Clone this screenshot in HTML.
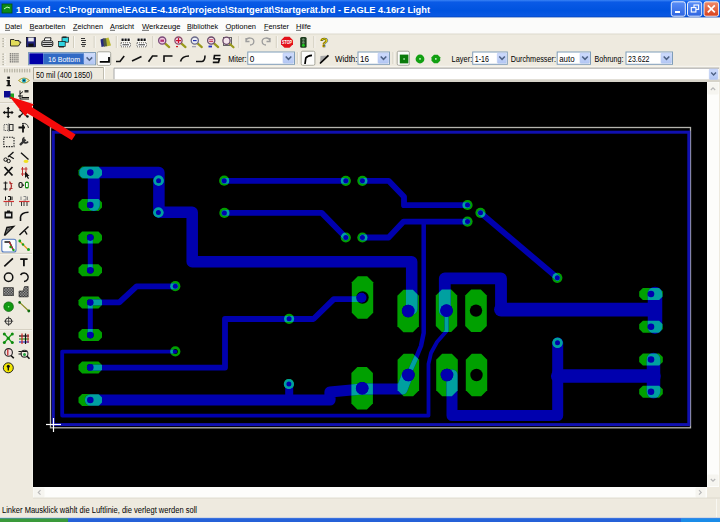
<!DOCTYPE html>
<html><head><meta charset="utf-8">
<style>*{margin:0;padding:0;box-sizing:border-box}
html,body{width:720px;height:522px;overflow:hidden;background:#eeeadf;font-family:"Liberation Sans",sans-serif;position:relative}
.a{position:absolute}
#canvas{left:33px;top:82px;width:674px;height:405px;background:#000}</style></head><body>
<svg class="a" style="left:0;top:0" width="720" height="522" viewBox="0 0 720 522" font-family="Liberation Sans, sans-serif"><defs><linearGradient id="ab" x1="0" y1="0" x2="0" y2="1"><stop offset="0" stop-color="#cfdcfd"/><stop offset="1" stop-color="#b2c6f3"/></linearGradient><linearGradient id="tg" x1="0" y1="0" x2="0" y2="1"><stop offset="0" stop-color="#3a83f5"/><stop offset="0.12" stop-color="#0a5ae6"/><stop offset="0.6" stop-color="#0053df"/><stop offset="0.9" stop-color="#0a58e2"/><stop offset="1" stop-color="#0040b8"/></linearGradient><linearGradient id="bg" x1="0" y1="0" x2="0" y2="1"><stop offset="0" stop-color="#5a8ff8"/><stop offset="1" stop-color="#2d64e0"/></linearGradient><linearGradient id="cg" x1="0" y1="0" x2="0" y2="1"><stop offset="0" stop-color="#f08c6c"/><stop offset="1" stop-color="#d8401c"/></linearGradient></defs><rect x="0" y="0" width="720" height="17.6" fill="url(#tg)"/><rect x="2" y="4" width="10" height="9" fill="#0c8a18" stroke="#045010" stroke-width="0.8"/><path d="M4,9 L7,7 L10,8" stroke="#c0ffc0" stroke-width="1" fill="none"/><text x="16" y="13.3" font-size="9.3" fill="#fff" font-weight="bold" textLength="414" lengthAdjust="spacingAndGlyphs">1 Board - C:\Programme\EAGLE-4.16r2\projects\Startgerät\Startgerät.brd - EAGLE 4.16r2 Light</text><rect x="671.3" y="1.8" width="14.0" height="14.4" rx="2" fill="url(#bg)" stroke="#fff" stroke-width="0.9"/><rect x="687.5" y="1.8" width="14.200000000000045" height="14.4" rx="2" fill="url(#bg)" stroke="#fff" stroke-width="0.9"/><rect x="675" y="11" width="5" height="2" fill="#fff"/><rect x="694" y="5" width="4.6" height="4.4" fill="none" stroke="#fff" stroke-width="1.1"/><rect x="691.3" y="7.6" width="4.6" height="4.4" fill="#3f76ea" stroke="#fff" stroke-width="1.1"/><rect x="704" y="1.8" width="14.6" height="14.4" rx="2" fill="url(#cg)" stroke="#fff" stroke-width="0.9"/><path d="M707.8,5.3 L714.8,12.3 M714.8,5.3 L707.8,12.3" stroke="#fff" stroke-width="1.7"/><rect x="0" y="17.6" width="720" height="16.6" fill="#fbfbfa"/><line x1="0" y1="34" x2="720" y2="34" stroke="#d6d2c2" stroke-width="0.8"/><text x="5" y="28.8" font-size="7.4" fill="#000" textLength="17" lengthAdjust="spacingAndGlyphs">Datei</text><text x="29.5" y="28.8" font-size="7.4" fill="#000" textLength="36" lengthAdjust="spacingAndGlyphs">Bearbeiten</text><text x="73" y="28.8" font-size="7.4" fill="#000" textLength="30" lengthAdjust="spacingAndGlyphs">Zeichnen</text><text x="110" y="28.8" font-size="7.4" fill="#000" textLength="24" lengthAdjust="spacingAndGlyphs">Ansicht</text><text x="142" y="28.8" font-size="7.4" fill="#000" textLength="38.5" lengthAdjust="spacingAndGlyphs">Werkzeuge</text><text x="187" y="28.8" font-size="7.4" fill="#000" textLength="31" lengthAdjust="spacingAndGlyphs">Bibliothek</text><text x="225.5" y="28.8" font-size="7.4" fill="#000" textLength="30.5" lengthAdjust="spacingAndGlyphs">Optionen</text><text x="264" y="28.8" font-size="7.4" fill="#000" textLength="25" lengthAdjust="spacingAndGlyphs">Fenster</text><text x="296" y="28.8" font-size="7.4" fill="#000" textLength="15" lengthAdjust="spacingAndGlyphs">Hilfe</text><line x1="5" y1="30.3" x2="10" y2="30.3" stroke="#000" stroke-width="0.6"/><line x1="29.5" y1="30.3" x2="34.5" y2="30.3" stroke="#000" stroke-width="0.6"/><line x1="73" y1="30.3" x2="77.5" y2="30.3" stroke="#000" stroke-width="0.6"/><line x1="110" y1="30.3" x2="115" y2="30.3" stroke="#000" stroke-width="0.6"/><line x1="142" y1="30.3" x2="149" y2="30.3" stroke="#000" stroke-width="0.6"/><line x1="187" y1="30.3" x2="191.5" y2="30.3" stroke="#000" stroke-width="0.6"/><line x1="225.5" y1="30.3" x2="230.5" y2="30.3" stroke="#000" stroke-width="0.6"/><line x1="264" y1="30.3" x2="268.5" y2="30.3" stroke="#000" stroke-width="0.6"/><line x1="296" y1="30.3" x2="301" y2="30.3" stroke="#000" stroke-width="0.6"/><rect x="2.3" y="38" width="2" height="1.3" fill="#b8b5a6"/><rect x="4.3" y="38" width="1.2" height="1.3" fill="#fff"/><rect x="2.3" y="40.6" width="2" height="1.3" fill="#b8b5a6"/><rect x="4.3" y="40.6" width="1.2" height="1.3" fill="#fff"/><rect x="2.3" y="43.2" width="2" height="1.3" fill="#b8b5a6"/><rect x="4.3" y="43.2" width="1.2" height="1.3" fill="#fff"/><rect x="2.3" y="45.800000000000004" width="2" height="1.3" fill="#b8b5a6"/><rect x="4.3" y="45.800000000000004" width="1.2" height="1.3" fill="#fff"/><path d="M10.5,39.5 L14,39.5 L15,40.5 L19,40.5 L19,42 L21,42 L18.5,46 L10.5,46 Z" fill="#e2dc5a" stroke="#222" stroke-width="0.9"/><rect x="26.3" y="37.3" width="9.4" height="9.6" fill="#22237c" stroke="#000" stroke-width="0.6"/><rect x="28.2" y="37.6" width="5.6" height="3.8" fill="#e8e8f0"/><rect x="28.4" y="43.6" width="5.2" height="3" fill="#101010"/><path d="M44,41 L45,37.8 L51,37.8 L50.5,41" fill="#fff" stroke="#111" stroke-width="0.9"/><rect x="41.8" y="40.8" width="11" height="5.6" rx="1.5" fill="#fff" stroke="#111" stroke-width="1"/><path d="M42.3,42.7 L52.3,42.7 M42.3,44.6 L52.3,44.6" stroke="#111" stroke-width="1"/><rect x="62" y="37.2" width="6.6" height="5" fill="#31d4e0" stroke="#111" stroke-width="0.7"/><rect x="58.6" y="41.5" width="6.6" height="5" fill="#31d4e0" stroke="#111" stroke-width="0.7"/><rect x="59" y="46" width="5" height="1.5" fill="#222"/><rect x="62.5" y="36.5" width="4" height="1.2" fill="#111"/><line x1="73.5" y1="36" x2="73.5" y2="48" stroke="#d2cebf" stroke-width="1"/><line x1="74.5" y1="36" x2="74.5" y2="48" stroke="#fff" stroke-width="0.6"/><path d="M81,38.5 L85,38.5 M81,40.5 L86,40.5 M82,42.5 L85.5,42.5 M81,44.5 L86,44.5 M82,46.3 L85,46.3" stroke="#333" stroke-width="1.1"/><line x1="94.2" y1="36" x2="94.2" y2="48" stroke="#d2cebf" stroke-width="1"/><line x1="95.2" y1="36" x2="95.2" y2="48" stroke="#fff" stroke-width="0.6"/><path d="M100.5,39.5 L104.5,38 L105.5,46 L101.5,47 Z" fill="#24287e"/><path d="M105,38.5 L108.5,37.5 L111,45.5 L106,46.5 Z" fill="#b8b830"/><path d="M103,39 L106,38.3 L107,46 L104,46.8 Z" fill="#505a40"/><line x1="116.3" y1="36" x2="116.3" y2="48" stroke="#d2cebf" stroke-width="1"/><line x1="117.3" y1="36" x2="117.3" y2="48" stroke="#fff" stroke-width="0.6"/><rect x="121" y="38" width="9.5" height="3.6" fill="#fff"/><path d="M121.5,39.8 L130,39.8" stroke="#111" stroke-width="2.4" stroke-dasharray="2.2 0.8"/><rect x="121" y="42.8" width="9.5" height="4" fill="#fff" stroke="#222" stroke-width="0.7" stroke-dasharray="1 1"/><path d="M122.5,44.8 L129,44.8" stroke="#333" stroke-width="1"/><rect x="137" y="38" width="9.5" height="3.6" fill="#fff"/><path d="M137.5,39.8 L146,39.8" stroke="#111" stroke-width="2.4" stroke-dasharray="2.2 0.8"/><rect x="137" y="42.8" width="9.5" height="4" fill="#fff" stroke="#222" stroke-width="0.7" stroke-dasharray="1 1"/><path d="M138.5,44.8 L145,44.8" stroke="#333" stroke-width="1"/><line x1="152.8" y1="36" x2="152.8" y2="48" stroke="#d2cebf" stroke-width="1"/><line x1="153.8" y1="36" x2="153.8" y2="48" stroke="#fff" stroke-width="0.6"/><line x1="164.7" y1="43.1" x2="169.2" y2="47.1" stroke="#9a9a1c" stroke-width="2.2" stroke-linecap="round"/><circle cx="162.2" cy="40.6" r="3.6" fill="#f0c8e0" stroke="#7a4a7a" stroke-width="1.3"/><rect x="160.4" y="39.6" width="3.6" height="2.2" fill="#b03070"/><line x1="181.0" y1="43.1" x2="185.5" y2="47.1" stroke="#9a9a1c" stroke-width="2.2" stroke-linecap="round"/><circle cx="178.5" cy="40.6" r="3.6" fill="#f4e0ec" stroke="#8a4a6a" stroke-width="1.3"/><path d="M176,40.6 L181,40.6 M178.5,38.1 L178.5,43.1" stroke="#d01030" stroke-width="1.3"/><rect x="176" y="46" width="2" height="1.2" fill="#d02020"/><line x1="197.3" y1="43.1" x2="201.8" y2="47.1" stroke="#9a9a1c" stroke-width="2.2" stroke-linecap="round"/><circle cx="194.8" cy="40.6" r="3.6" fill="#eceef4" stroke="#6a6a8a" stroke-width="1.3"/><path d="M193,40.6 L196.6,40.6" stroke="#2030b0" stroke-width="1.2"/><rect x="192" y="46.3" width="4" height="0.9" fill="#8080a0"/><line x1="213.7" y1="43.1" x2="218.2" y2="47.1" stroke="#9a9a1c" stroke-width="2.2" stroke-linecap="round"/><circle cx="211.2" cy="40.6" r="3.6" fill="#f4e4ec" stroke="#6a4a6a" stroke-width="1.3"/><path d="M209.2,39.8 L213.2,39.8 M209.2,41.6 L213.2,41.6" stroke="#c02040" stroke-width="0.9"/><rect x="208.5" y="45.6" width="3.5" height="1.8" fill="#2030c0"/><rect x="223.5" y="37.5" width="8" height="8" fill="#eee" stroke="#555" stroke-width="0.9"/><line x1="229.0" y1="43.3" x2="233.5" y2="47.3" stroke="#9a9a1c" stroke-width="2.2" stroke-linecap="round"/><circle cx="226.5" cy="40.8" r="3.6" fill="#f4e4ec" stroke="#6a4a6a" stroke-width="1.3"/><line x1="238.8" y1="36" x2="238.8" y2="48" stroke="#d2cebf" stroke-width="1"/><line x1="239.8" y1="36" x2="239.8" y2="48" stroke="#fff" stroke-width="0.6"/><path d="M246,40.5 A4,3.5 0 1 1 250,45 M246,38 L246,41.5 L249.5,41.5" fill="none" stroke="#9d9d9d" stroke-width="1.3"/><path d="M270,40.5 A4,3.5 0 1 0 266,45 M270,38 L270,41.5 L266.5,41.5" fill="none" stroke="#9d9d9d" stroke-width="1.3"/><line x1="276.3" y1="36" x2="276.3" y2="48" stroke="#d2cebf" stroke-width="1"/><line x1="277.3" y1="36" x2="277.3" y2="48" stroke="#fff" stroke-width="0.6"/><polygon points="284.5,36.8 289.5,36.8 293,40.3 293,44.3 289.5,47.8 284.5,47.8 281,44.3 281,40.3" fill="#e3101a"/><text x="282" y="44.3" font-size="4.6" fill="#fff" font-weight="bold" textLength="10" lengthAdjust="spacingAndGlyphs">STOP</text><rect x="300.2" y="37" width="6.4" height="10.8" rx="1.5" fill="#1c3a1c"/><circle cx="303.4" cy="39.5" r="1.3" fill="#6a8a6a"/><circle cx="303.4" cy="42.4" r="1.3" fill="#6a8a6a"/><circle cx="303.4" cy="45.3" r="1.5" fill="#1fc81f"/><line x1="313.8" y1="36" x2="313.8" y2="48" stroke="#d2cebf" stroke-width="1"/><line x1="314.8" y1="36" x2="314.8" y2="48" stroke="#fff" stroke-width="0.6"/><text x="320.3" y="47.2" font-size="12" fill="#fff200" font-weight="bold" textLength="8" lengthAdjust="spacingAndGlyphs">?</text><text x="320.3" y="47.2" font-size="12" font-weight="bold" fill="none" stroke="#3a3400" stroke-width="0.5" textLength="8" lengthAdjust="spacingAndGlyphs">?</text><rect x="2.3" y="53.5" width="2" height="1.3" fill="#b8b5a6"/><rect x="4.3" y="53.5" width="1.2" height="1.3" fill="#fff"/><rect x="2.3" y="56.1" width="2" height="1.3" fill="#b8b5a6"/><rect x="4.3" y="56.1" width="1.2" height="1.3" fill="#fff"/><rect x="2.3" y="58.7" width="2" height="1.3" fill="#b8b5a6"/><rect x="4.3" y="58.7" width="1.2" height="1.3" fill="#fff"/><rect x="2.3" y="61.300000000000004" width="2" height="1.3" fill="#b8b5a6"/><rect x="4.3" y="61.300000000000004" width="1.2" height="1.3" fill="#fff"/><rect x="2.3" y="63.900000000000006" width="2" height="1.3" fill="#b8b5a6"/><rect x="4.3" y="63.900000000000006" width="1.2" height="1.3" fill="#fff"/><rect x="9.8" y="53.3" width="1.1" height="1.1" fill="#444"/><rect x="11.700000000000001" y="53.3" width="1.1" height="1.1" fill="#444"/><rect x="13.600000000000001" y="53.3" width="1.1" height="1.1" fill="#444"/><rect x="15.5" y="53.3" width="1.1" height="1.1" fill="#444"/><rect x="17.4" y="53.3" width="1.1" height="1.1" fill="#444"/><rect x="9.8" y="55.3" width="1.1" height="1.1" fill="#444"/><rect x="11.700000000000001" y="55.3" width="1.1" height="1.1" fill="#444"/><rect x="13.600000000000001" y="55.3" width="1.1" height="1.1" fill="#444"/><rect x="15.5" y="55.3" width="1.1" height="1.1" fill="#444"/><rect x="17.4" y="55.3" width="1.1" height="1.1" fill="#444"/><rect x="9.8" y="57.3" width="1.1" height="1.1" fill="#444"/><rect x="11.700000000000001" y="57.3" width="1.1" height="1.1" fill="#444"/><rect x="13.600000000000001" y="57.3" width="1.1" height="1.1" fill="#444"/><rect x="15.5" y="57.3" width="1.1" height="1.1" fill="#444"/><rect x="17.4" y="57.3" width="1.1" height="1.1" fill="#444"/><rect x="9.8" y="59.3" width="1.1" height="1.1" fill="#444"/><rect x="11.700000000000001" y="59.3" width="1.1" height="1.1" fill="#444"/><rect x="13.600000000000001" y="59.3" width="1.1" height="1.1" fill="#444"/><rect x="15.5" y="59.3" width="1.1" height="1.1" fill="#444"/><rect x="17.4" y="59.3" width="1.1" height="1.1" fill="#444"/><rect x="9.8" y="61.3" width="1.1" height="1.1" fill="#444"/><rect x="11.700000000000001" y="61.3" width="1.1" height="1.1" fill="#444"/><rect x="13.600000000000001" y="61.3" width="1.1" height="1.1" fill="#444"/><rect x="15.5" y="61.3" width="1.1" height="1.1" fill="#444"/><rect x="17.4" y="61.3" width="1.1" height="1.1" fill="#444"/><rect x="28.5" y="52.5" width="67" height="12.3" fill="#fff" stroke="#7f9db9"/><rect x="29.3" y="53.3" width="13.9" height="10.8" fill="#0000a8"/><rect x="43.2" y="53.3" width="40.8" height="10.8" fill="#316ac5"/><text x="48" y="62" font-size="7.6" fill="#fff" textLength="32" lengthAdjust="spacingAndGlyphs">16 Bottom</text><rect x="84" y="53.5" width="10.8" height="10.4" rx="1" fill="url(#ab)" stroke="#b7c8f0" stroke-width="0.6"/><path d="M86.6,57.4 L89.4,60.2 L92.2,57.4" fill="none" stroke="#4d6185" stroke-width="1.5"/><rect x="97.1" y="51.8" width="13.600000000000009" height="13.600000000000009" rx="1.5" fill="#fcfcfb" stroke="#9d9d92" stroke-width="0.9"/><path d="M99.8,61.8 L109,61.8 L109,57" fill="none" stroke="#000" stroke-width="1.8"/><path d="M116,61.5 L120,61.5 L124.2,56" fill="none" stroke="#111" stroke-width="1.6"/><path d="M132,61 L141.5,56.5" fill="none" stroke="#111" stroke-width="1.6"/><path d="M148.5,61.8 L152.5,56 L157.5,56" fill="none" stroke="#111" stroke-width="1.6"/><path d="M164,62 L164,56 L172.5,56" fill="none" stroke="#111" stroke-width="1.6"/><path d="M180.5,61.5 Q182,56 189,56" fill="none" stroke="#111" stroke-width="1.6"/><path d="M196,61.5 L202,61.5 Q205,61 205,55.5" fill="none" stroke="#111" stroke-width="1.6"/><path d="M220.5,55.5 L214.5,55.5 L214,58.7 L219.5,58.9 L218.5,62.3 L212.8,62.3" fill="none" stroke="#111" stroke-width="1.7"/><text x="228.2" y="61.9" font-size="8.2" fill="#000" textLength="18.3" lengthAdjust="spacingAndGlyphs">Miter:</text><rect x="247.8" y="52.0" width="46.69999999999999" height="12.299999999999997" fill="#fff" stroke="#7f9db9"/><rect x="283" y="53.0" width="10.5" height="10.299999999999997" rx="1" fill="url(#ab)" stroke="#b7c8f0" stroke-width="0.6"/><path d="M285.7,56.55 L288.5,59.35 L291.3,56.55" fill="none" stroke="#4d6185" stroke-width="1.5"/><text x="249.8" y="61.699999999999996" font-size="8.2" fill="#000">0</text><line x1="297.3" y1="52" x2="297.3" y2="64" stroke="#d2cebf" stroke-width="1"/><line x1="298.3" y1="52" x2="298.3" y2="64" stroke="#fff" stroke-width="0.6"/><rect x="301.2" y="51.2" width="13.699999999999989" height="14.099999999999994" rx="1.5" fill="#fcfcfb" stroke="#9d9d92" stroke-width="0.9"/><path d="M305,64 L305.8,58 Q307.5,55.5 312,55.3" fill="none" stroke="#000" stroke-width="1.7"/><path d="M320,63 L320.5,56 L328,55.5 Z" fill="#a8a8a8"/><path d="M320,63.5 L328.5,55.3" stroke="#000" stroke-width="1.7"/><text x="335" y="61.9" font-size="8.2" fill="#000" textLength="22.5" lengthAdjust="spacingAndGlyphs">Width:</text><rect x="358.0" y="52.0" width="31.5" height="12.299999999999997" fill="#fff" stroke="#7f9db9"/><rect x="378" y="53.0" width="10.5" height="10.299999999999997" rx="1" fill="url(#ab)" stroke="#b7c8f0" stroke-width="0.6"/><path d="M380.7,56.55 L383.5,59.35 L386.3,56.55" fill="none" stroke="#4d6185" stroke-width="1.5"/><text x="360.0" y="61.699999999999996" font-size="8.2" fill="#000">16</text><line x1="393" y1="52" x2="393" y2="64" stroke="#d2cebf" stroke-width="1"/><line x1="394" y1="52" x2="394" y2="64" stroke="#fff" stroke-width="0.6"/><rect x="397.2" y="51.2" width="12.199999999999989" height="14.099999999999994" rx="1.5" fill="#fcfcfb" stroke="#9d9d92" stroke-width="0.9"/><rect x="399.8" y="54.6" width="8.6" height="8.8" fill="#0a7a0a"/><rect x="403.3" y="58.2" width="1.6" height="1.6" fill="#9fdc9f"/><circle cx="420" cy="59" r="4.4" fill="#12a012"/><rect x="419.2" y="58.2" width="1.6" height="1.4" fill="#e0ffe0"/><polygon points="434,54.7 437.7,54.7 440.2,57.2 440.2,60.8 437.7,63.3 434,63.3 431.5,60.8 431.5,57.2" fill="#12a012"/><rect x="435" y="58.2" width="1.6" height="1.4" fill="#e0ffe0"/><text x="451.6" y="61.9" font-size="8.2" fill="#000" textLength="20.6" lengthAdjust="spacingAndGlyphs">Layer:</text><rect x="472.7" y="52.0" width="34.60000000000002" height="12.299999999999997" fill="#fff" stroke="#7f9db9"/><rect x="497.3" y="53.0" width="9.0" height="10.299999999999997" rx="1" fill="url(#ab)" stroke="#b7c8f0" stroke-width="0.6"/><path d="M499.25,56.55 L502.05,59.35 L504.85,56.55" fill="none" stroke="#4d6185" stroke-width="1.5"/><text x="474.7" y="61.699999999999996" font-size="8.2" fill="#000" textLength="14.3" lengthAdjust="spacingAndGlyphs">1-16</text><text x="510.7" y="61.9" font-size="8.2" fill="#000" textLength="45.3" lengthAdjust="spacingAndGlyphs">Durchmesser:</text><rect x="557.2" y="52.0" width="33.299999999999955" height="12.299999999999997" fill="#fff" stroke="#7f9db9"/><rect x="580" y="53.0" width="9.5" height="10.299999999999997" rx="1" fill="url(#ab)" stroke="#b7c8f0" stroke-width="0.6"/><path d="M582.2,56.55 L585.0,59.35 L587.8,56.55" fill="none" stroke="#4d6185" stroke-width="1.5"/><text x="559.2" y="61.699999999999996" font-size="8.2" fill="#000" textLength="15.4" lengthAdjust="spacingAndGlyphs">auto</text><text x="594.5" y="61.9" font-size="8.2" fill="#000" textLength="29" lengthAdjust="spacingAndGlyphs">Bohrung:</text><rect x="626.0" y="52.0" width="46.5" height="12.299999999999997" fill="#fff" stroke="#7f9db9"/><rect x="661" y="53.0" width="10.5" height="10.299999999999997" rx="1" fill="url(#ab)" stroke="#b7c8f0" stroke-width="0.6"/><path d="M663.7,56.55 L666.5,59.35 L669.3,56.55" fill="none" stroke="#4d6185" stroke-width="1.5"/><text x="628.0" y="61.699999999999996" font-size="8.2" fill="#000" textLength="21.5" lengthAdjust="spacingAndGlyphs">23.622</text><line x1="0" y1="66.3" x2="720" y2="66.3" stroke="#fff" stroke-width="0.6"/><rect x="4.0" y="68.8" width="1.3" height="3.6" fill="#b8b5a6"/><rect x="6.5" y="68.8" width="1.3" height="3.6" fill="#b8b5a6"/><rect x="9.0" y="68.8" width="1.3" height="3.6" fill="#b8b5a6"/><rect x="11.5" y="68.8" width="1.3" height="3.6" fill="#b8b5a6"/><rect x="14.0" y="68.8" width="1.3" height="3.6" fill="#b8b5a6"/><rect x="16.5" y="68.8" width="1.3" height="3.6" fill="#b8b5a6"/><rect x="19.0" y="68.8" width="1.3" height="3.6" fill="#b8b5a6"/><rect x="21.5" y="68.8" width="1.3" height="3.6" fill="#b8b5a6"/><rect x="24.0" y="68.8" width="1.3" height="3.6" fill="#b8b5a6"/><rect x="26.5" y="68.8" width="1.3" height="3.6" fill="#b8b5a6"/><rect x="29.0" y="68.8" width="1.3" height="3.6" fill="#b8b5a6"/><rect x="33" y="67" width="70" height="14.5" fill="#eeeadf"/><path d="M33.5,81.5 L33.5,67.5 L103,67.5" fill="none" stroke="#a7a395" stroke-width="1"/><text x="36" y="77.8" font-size="8.2" fill="#000" textLength="56.4" lengthAdjust="spacingAndGlyphs">50 mil (400 1850)</text><line x1="103.5" y1="67" x2="103.5" y2="81.5" stroke="#c0bdb0"/><line x1="104.5" y1="67" x2="104.5" y2="81.5" stroke="#fff"/><rect x="113.8" y="68" width="605" height="11.4" fill="#fff"/><path d="M114,79.5 L114,68.2 L719,68.2" fill="none" stroke="#9c9c9c" stroke-width="0.9"/><rect x="33" y="79.4" width="687" height="2.6" fill="#d6d3c9"/><rect x="709.3" y="69" width="8.6" height="10.5" rx="1" fill="url(#ab)" stroke="#b7c8f0" stroke-width="0.6"/><path d="M711.2,72.6 L713.6,75 L716,72.6" fill="none" stroke="#4d6185" stroke-width="1.4"/><rect x="707" y="82" width="12" height="405" fill="#fdfdfb"/><rect x="707.5" y="82.5" width="11" height="12" rx="1" fill="#f6f5f0"/><path d="M710.8,90 L713,87.8 L715.2,90" fill="none" stroke="#b8b8b8" stroke-width="1.2"/><rect x="707.5" y="474.5" width="11" height="11.5" rx="1" fill="#f6f5f0"/><path d="M710.8,479 L713,481.2 L715.2,479" fill="none" stroke="#b8b8b8" stroke-width="1.2"/><rect x="33" y="487" width="674" height="11" fill="#fdfdfb"/><rect x="33.5" y="487.5" width="11" height="10" rx="1" fill="#f6f5f0"/><path d="M40.5,490.2 L38.3,492.4 L40.5,494.6" fill="none" stroke="#b8b8b8" stroke-width="1.2"/><rect x="695.5" y="487.5" width="10" height="10" rx="1" fill="#f6f5f0"/><path d="M699,490.2 L701.2,492.4 L699,494.6" fill="none" stroke="#b8b8b8" stroke-width="1.2"/><line x1="33" y1="498" x2="720" y2="498" stroke="#d8d5c8" stroke-width="0.8"/><text x="2" y="512.8" font-size="8.4" fill="#000" textLength="195" lengthAdjust="spacingAndGlyphs">Linker Mausklick wählt die Luftlinie, die verlegt werden soll</text><line x1="716.5" y1="499" x2="716.5" y2="517" stroke="#fff" stroke-width="0.6"/><rect x="0" y="518" width="720" height="4" fill="#2561d8"/><rect x="0" y="518" width="68" height="4" fill="#3a9a3a"/><rect x="681" y="518" width="39" height="4" fill="#1a8ce8"/><line x1="0" y1="518.2" x2="720" y2="518.2" stroke="#5a8ae8" stroke-width="0.6"/></svg>
<div id="canvas" class="a"></div>
<svg class="a" style="left:33px;top:82px" width="674" height="405" viewBox="33 82 674 405">
<defs><mask id="pm" maskUnits="userSpaceOnUse" x="33" y="82" width="674" height="405"><g fill="#fff"><polygon points="82.1,166.6 98.5,166.6 102.0,170.2 102.0,175.0 98.5,178.6 82.1,178.6 78.5,175.0 78.5,170.2"/><polygon points="82.1,199.0 98.5,199.0 102.0,202.6 102.0,207.4 98.5,211.0 82.1,211.0 78.5,207.4 78.5,202.6"/><polygon points="82.1,231.6 98.5,231.6 102.0,235.2 102.0,240.0 98.5,243.6 82.1,243.6 78.5,240.0 78.5,235.2"/><polygon points="82.1,264.2 98.5,264.2 102.0,267.8 102.0,272.6 98.5,276.2 82.1,276.2 78.5,272.6 78.5,267.8"/><polygon points="82.1,296.6 98.5,296.6 102.0,300.2 102.0,305.0 98.5,308.6 82.1,308.6 78.5,305.0 78.5,300.2"/><polygon points="82.1,329.0 98.5,329.0 102.0,332.6 102.0,337.4 98.5,341.0 82.1,341.0 78.5,337.4 78.5,332.6"/><polygon points="82.1,361.4 98.5,361.4 102.0,365.0 102.0,369.8 98.5,373.4 82.1,373.4 78.5,369.8 78.5,365.0"/><polygon points="82.1,394.0 98.5,394.0 102.0,397.6 102.0,402.4 98.5,406.0 82.1,406.0 78.5,402.4 78.5,397.6"/><polygon points="642.9,288.0 659.1,288.0 662.8,291.6 662.8,296.4 659.1,300.0 642.9,300.0 639.2,296.4 639.2,291.6"/><polygon points="642.9,320.7 659.1,320.7 662.8,324.3 662.8,329.1 659.1,332.7 642.9,332.7 639.2,329.1 639.2,324.3"/><polygon points="642.9,353.5 659.1,353.5 662.8,357.1 662.8,361.9 659.1,365.5 642.9,365.5 639.2,361.9 639.2,357.1"/><polygon points="642.9,385.7 659.1,385.7 662.8,389.3 662.8,394.1 659.1,397.7 642.9,397.7 639.2,394.1 639.2,389.3"/><polygon points="357.8,276.2 367.2,276.2 373.2,282.2 373.2,312.8 367.2,318.8 357.8,318.8 351.8,312.8 351.8,282.2"/><polygon points="403.4,289.8 412.9,289.8 418.9,295.8 418.9,326.2 412.9,332.2 403.4,332.2 397.4,326.2 397.4,295.8"/><polygon points="441.8,289.4 451.2,289.4 457.2,295.4 457.2,325.9 451.2,331.9 441.8,331.9 435.8,325.9 435.8,295.4"/><polygon points="471.2,289.4 480.8,289.4 486.8,295.4 486.8,325.9 480.8,331.9 471.2,331.9 465.2,325.9 465.2,295.4"/><polygon points="403.6,353.8 413.1,353.8 419.1,359.8 419.1,390.2 413.1,396.2 403.6,396.2 397.6,390.2 397.6,359.8"/><polygon points="442.2,353.8 451.8,353.8 457.8,359.8 457.8,390.2 451.8,396.2 442.2,396.2 436.2,390.2 436.2,359.8"/><polygon points="471.8,353.8 481.2,353.8 487.2,359.8 487.2,390.2 481.2,396.2 471.8,396.2 465.8,390.2 465.8,359.8"/><polygon points="357.4,366.9 366.9,366.9 372.9,372.9 372.9,403.4 366.9,409.4 357.4,409.4 351.4,403.4 351.4,372.9"/><circle cx="158.6" cy="180.7" r="5.1"/><circle cx="158.4" cy="212.5" r="5.1"/><circle cx="224.2" cy="180.7" r="5.1"/><circle cx="224.4" cy="212.9" r="5.1"/><circle cx="345.8" cy="180.8" r="5.1"/><circle cx="362.4" cy="180.8" r="5.1"/><circle cx="345.8" cy="237.5" r="5.1"/><circle cx="362.4" cy="237.5" r="5.1"/><circle cx="467.5" cy="205" r="5.1"/><circle cx="480.5" cy="212.8" r="5.1"/><circle cx="467.5" cy="221.6" r="5.1"/><circle cx="557.3" cy="277.8" r="5.1"/><circle cx="557.5" cy="342.8" r="5.1"/><circle cx="175.3" cy="286.2" r="5.1"/><circle cx="175.3" cy="351.4" r="5.1"/><circle cx="289.1" cy="318.8" r="5.1"/><circle cx="288.9" cy="384" r="5.1"/></g><g fill="#000"><circle cx="90.3" cy="172.6" r="3.3"/><circle cx="90.3" cy="205" r="3.3"/><circle cx="90.3" cy="237.6" r="3.3"/><circle cx="90.3" cy="270.2" r="3.3"/><circle cx="90.3" cy="302.6" r="3.3"/><circle cx="90.3" cy="335" r="3.3"/><circle cx="90.3" cy="367.4" r="3.3"/><circle cx="90.3" cy="400" r="3.3"/><circle cx="651" cy="294" r="3.3"/><circle cx="651" cy="326.7" r="3.3"/><circle cx="651" cy="359.5" r="3.3"/><circle cx="651" cy="391.7" r="3.3"/><circle cx="362.5" cy="297.5" r="6.2"/><circle cx="408.2" cy="311" r="6.2"/><circle cx="446.5" cy="310.6" r="6.2"/><circle cx="476" cy="310.6" r="6.2"/><circle cx="408.3" cy="375" r="6.2"/><circle cx="447" cy="375" r="6.2"/><circle cx="476.5" cy="375" r="6.2"/><circle cx="362.2" cy="388.2" r="6.2"/><circle cx="158.6" cy="180.7" r="2.5"/><circle cx="158.4" cy="212.5" r="2.5"/><circle cx="224.2" cy="180.7" r="2.5"/><circle cx="224.4" cy="212.9" r="2.5"/><circle cx="345.8" cy="180.8" r="2.5"/><circle cx="362.4" cy="180.8" r="2.5"/><circle cx="345.8" cy="237.5" r="2.5"/><circle cx="362.4" cy="237.5" r="2.5"/><circle cx="467.5" cy="205" r="2.5"/><circle cx="480.5" cy="212.8" r="2.5"/><circle cx="467.5" cy="221.6" r="2.5"/><circle cx="557.3" cy="277.8" r="2.5"/><circle cx="557.5" cy="342.8" r="2.5"/><circle cx="175.3" cy="286.2" r="2.5"/><circle cx="175.3" cy="351.4" r="2.5"/><circle cx="289.1" cy="318.8" r="2.5"/><circle cx="288.9" cy="384" r="2.5"/></g></mask></defs>
<rect x="50.5" y="127.5" width="640" height="300.3" fill="none" stroke="#b4b4ae" stroke-width="1.3"/>
<rect x="53.3" y="132.2" width="635.5" height="292.4" fill="none" stroke="#1010b0" stroke-width="3"/>
<g fill="#00a000"><polygon points="82.1,166.6 98.5,166.6 102.0,170.2 102.0,175.0 98.5,178.6 82.1,178.6 78.5,175.0 78.5,170.2"/><polygon points="82.1,199.0 98.5,199.0 102.0,202.6 102.0,207.4 98.5,211.0 82.1,211.0 78.5,207.4 78.5,202.6"/><polygon points="82.1,231.6 98.5,231.6 102.0,235.2 102.0,240.0 98.5,243.6 82.1,243.6 78.5,240.0 78.5,235.2"/><polygon points="82.1,264.2 98.5,264.2 102.0,267.8 102.0,272.6 98.5,276.2 82.1,276.2 78.5,272.6 78.5,267.8"/><polygon points="82.1,296.6 98.5,296.6 102.0,300.2 102.0,305.0 98.5,308.6 82.1,308.6 78.5,305.0 78.5,300.2"/><polygon points="82.1,329.0 98.5,329.0 102.0,332.6 102.0,337.4 98.5,341.0 82.1,341.0 78.5,337.4 78.5,332.6"/><polygon points="82.1,361.4 98.5,361.4 102.0,365.0 102.0,369.8 98.5,373.4 82.1,373.4 78.5,369.8 78.5,365.0"/><polygon points="82.1,394.0 98.5,394.0 102.0,397.6 102.0,402.4 98.5,406.0 82.1,406.0 78.5,402.4 78.5,397.6"/><polygon points="642.9,288.0 659.1,288.0 662.8,291.6 662.8,296.4 659.1,300.0 642.9,300.0 639.2,296.4 639.2,291.6"/><polygon points="642.9,320.7 659.1,320.7 662.8,324.3 662.8,329.1 659.1,332.7 642.9,332.7 639.2,329.1 639.2,324.3"/><polygon points="642.9,353.5 659.1,353.5 662.8,357.1 662.8,361.9 659.1,365.5 642.9,365.5 639.2,361.9 639.2,357.1"/><polygon points="642.9,385.7 659.1,385.7 662.8,389.3 662.8,394.1 659.1,397.7 642.9,397.7 639.2,394.1 639.2,389.3"/><polygon points="357.8,276.2 367.2,276.2 373.2,282.2 373.2,312.8 367.2,318.8 357.8,318.8 351.8,312.8 351.8,282.2"/><polygon points="403.4,289.8 412.9,289.8 418.9,295.8 418.9,326.2 412.9,332.2 403.4,332.2 397.4,326.2 397.4,295.8"/><polygon points="441.8,289.4 451.2,289.4 457.2,295.4 457.2,325.9 451.2,331.9 441.8,331.9 435.8,325.9 435.8,295.4"/><polygon points="471.2,289.4 480.8,289.4 486.8,295.4 486.8,325.9 480.8,331.9 471.2,331.9 465.2,325.9 465.2,295.4"/><polygon points="403.6,353.8 413.1,353.8 419.1,359.8 419.1,390.2 413.1,396.2 403.6,396.2 397.6,390.2 397.6,359.8"/><polygon points="442.2,353.8 451.8,353.8 457.8,359.8 457.8,390.2 451.8,396.2 442.2,396.2 436.2,390.2 436.2,359.8"/><polygon points="471.8,353.8 481.2,353.8 487.2,359.8 487.2,390.2 481.2,396.2 471.8,396.2 465.8,390.2 465.8,359.8"/><polygon points="357.4,366.9 366.9,366.9 372.9,372.9 372.9,403.4 366.9,409.4 357.4,409.4 351.4,403.4 351.4,372.9"/><circle cx="158.6" cy="180.7" r="5.1"/><circle cx="158.4" cy="212.5" r="5.1"/><circle cx="224.2" cy="180.7" r="5.1"/><circle cx="224.4" cy="212.9" r="5.1"/><circle cx="345.8" cy="180.8" r="5.1"/><circle cx="362.4" cy="180.8" r="5.1"/><circle cx="345.8" cy="237.5" r="5.1"/><circle cx="362.4" cy="237.5" r="5.1"/><circle cx="467.5" cy="205" r="5.1"/><circle cx="480.5" cy="212.8" r="5.1"/><circle cx="467.5" cy="221.6" r="5.1"/><circle cx="557.3" cy="277.8" r="5.1"/><circle cx="557.5" cy="342.8" r="5.1"/><circle cx="175.3" cy="286.2" r="5.1"/><circle cx="175.3" cy="351.4" r="5.1"/><circle cx="289.1" cy="318.8" r="5.1"/><circle cx="288.9" cy="384" r="5.1"/></g>
<g fill="#000"><circle cx="90.3" cy="172.6" r="3.3"/><circle cx="90.3" cy="205" r="3.3"/><circle cx="90.3" cy="237.6" r="3.3"/><circle cx="90.3" cy="270.2" r="3.3"/><circle cx="90.3" cy="302.6" r="3.3"/><circle cx="90.3" cy="335" r="3.3"/><circle cx="90.3" cy="367.4" r="3.3"/><circle cx="90.3" cy="400" r="3.3"/><circle cx="651" cy="294" r="3.3"/><circle cx="651" cy="326.7" r="3.3"/><circle cx="651" cy="359.5" r="3.3"/><circle cx="651" cy="391.7" r="3.3"/><circle cx="362.5" cy="297.5" r="6.2"/><circle cx="408.2" cy="311" r="6.2"/><circle cx="446.5" cy="310.6" r="6.2"/><circle cx="476" cy="310.6" r="6.2"/><circle cx="408.3" cy="375" r="6.2"/><circle cx="447" cy="375" r="6.2"/><circle cx="476.5" cy="375" r="6.2"/><circle cx="362.2" cy="388.2" r="6.2"/><circle cx="158.6" cy="180.7" r="2.5"/><circle cx="158.4" cy="212.5" r="2.5"/><circle cx="224.2" cy="180.7" r="2.5"/><circle cx="224.4" cy="212.9" r="2.5"/><circle cx="345.8" cy="180.8" r="2.5"/><circle cx="362.4" cy="180.8" r="2.5"/><circle cx="345.8" cy="237.5" r="2.5"/><circle cx="362.4" cy="237.5" r="2.5"/><circle cx="467.5" cy="205" r="2.5"/><circle cx="480.5" cy="212.8" r="2.5"/><circle cx="467.5" cy="221.6" r="2.5"/><circle cx="557.3" cy="277.8" r="2.5"/><circle cx="557.5" cy="342.8" r="2.5"/><circle cx="175.3" cy="286.2" r="2.5"/><circle cx="175.3" cy="351.4" r="2.5"/><circle cx="289.1" cy="318.8" r="2.5"/><circle cx="288.9" cy="384" r="2.5"/></g>
<g fill="#0000ae"><circle cx="90.3" cy="172.6" r="3.4"/><circle cx="90.3" cy="205" r="3.4"/><circle cx="90.3" cy="237.6" r="3.4"/><circle cx="90.3" cy="270.2" r="3.4"/><circle cx="90.3" cy="302.6" r="3.4"/><circle cx="90.3" cy="335" r="3.4"/><circle cx="90.3" cy="367.4" r="3.4"/><circle cx="90.3" cy="400" r="3.4"/><circle cx="651" cy="294" r="3.4"/><circle cx="651" cy="326.7" r="3.4"/><circle cx="651" cy="359.5" r="3.4"/><circle cx="651" cy="391.7" r="3.4"/></g>
<g fill="none" stroke="#0000ae" stroke-linecap="round" stroke-linejoin="round"><path d="M85,172.6 L158.9,172.6 L158.9,212.2 L192.2,212.2 L192.2,261.7 L411.7,261.7 L411.7,309" stroke-width="11.5"/><path d="M93.8,173 L93.8,205" stroke-width="12"/><path d="M224.2,180.8 L345.8,180.8" stroke-width="5.8"/><path d="M362.4,180.8 L388.6,180.8 L404,196.8 L404,205.2 L467.5,205.2" stroke-width="5.8"/><path d="M224.4,212.9 L321.7,212.9 L345.8,237.5" stroke-width="5.8"/><path d="M362.4,237.5 L388.6,237.5 L403.6,221.6 L467.5,221.6" stroke-width="5.8"/><path d="M480.5,212.8 L557.3,277.8" stroke-width="5.8"/><path d="M423.7,221.6 L423.7,333 L421,346 L416,358 L408.3,375" stroke-width="4.5"/><path d="M175.3,351.6 L62.2,351.6 L62.2,415.6 L428.5,415.6 L428.5,364 L431,353 L437,342 L446.6,331 L446.5,310.6" stroke-width="3.8"/><path d="M90.3,302.4 L119.3,302.4 L136.6,286.3 L175.3,286.3" stroke-width="5.8"/><path d="M90.3,237.6 L90.3,270.2" stroke-width="5"/><path d="M90.3,302.6 L90.3,335" stroke-width="5"/><path d="M90.5,367.6 L225,367.6 L225,319 L313.5,319 L333.8,299.1 L361,299.1" stroke-width="5.8"/><path d="M90.5,400 L330,400 L330,392 L362,389 L402,389 L407.5,375" stroke-width="11.2"/><path d="M289.2,384 L289.2,398" stroke-width="8"/><path d="M444.8,310.6 L444.8,278.4 L501,278.4 L501,309.8" stroke-width="11.8"/><path d="M501,309.6 L655,309.6" stroke-width="13.8"/><path d="M655,294 L655,326.7" stroke-width="14.5"/><path d="M452,375 L452,415.5 L557.7,415.5 L557.7,342.8" stroke-width="11"/><path d="M557.7,375.9 L654,375.9" stroke-width="13.5"/><path d="M653.5,359.5 L653.5,391.7" stroke-width="13.5"/><circle cx="361.5" cy="297.8" r="5" fill="#0000ae" stroke="none"/><circle cx="408.2" cy="311" r="6.3" fill="#0000ae" stroke="none"/><circle cx="446.5" cy="310.6" r="6.3" fill="#0000ae" stroke="none"/><circle cx="408.3" cy="375" r="6.3" fill="#0000ae" stroke="none"/><circle cx="447" cy="375" r="6.3" fill="#0000ae" stroke="none"/><circle cx="362.2" cy="388.2" r="6.3" fill="#0000ae" stroke="none"/></g>
<g fill="none" stroke="#00a0a0" stroke-linecap="round" stroke-linejoin="round" mask="url(#pm)"><path d="M85,172.6 L158.9,172.6 L158.9,212.2 L192.2,212.2 L192.2,261.7 L411.7,261.7 L411.7,309" stroke-width="11.5"/><path d="M93.8,173 L93.8,205" stroke-width="12"/><path d="M224.2,180.8 L345.8,180.8" stroke-width="5.8"/><path d="M362.4,180.8 L388.6,180.8 L404,196.8 L404,205.2 L467.5,205.2" stroke-width="5.8"/><path d="M224.4,212.9 L321.7,212.9 L345.8,237.5" stroke-width="5.8"/><path d="M362.4,237.5 L388.6,237.5 L403.6,221.6 L467.5,221.6" stroke-width="5.8"/><path d="M480.5,212.8 L557.3,277.8" stroke-width="5.8"/><path d="M423.7,221.6 L423.7,333 L421,346 L416,358 L408.3,375" stroke-width="4.5"/><path d="M175.3,351.6 L62.2,351.6 L62.2,415.6 L428.5,415.6 L428.5,364 L431,353 L437,342 L446.6,331 L446.5,310.6" stroke-width="3.8"/><path d="M90.3,302.4 L119.3,302.4 L136.6,286.3 L175.3,286.3" stroke-width="5.8"/><path d="M90.3,237.6 L90.3,270.2" stroke-width="5"/><path d="M90.3,302.6 L90.3,335" stroke-width="5"/><path d="M90.5,367.6 L225,367.6 L225,319 L313.5,319 L333.8,299.1 L361,299.1" stroke-width="5.8"/><path d="M90.5,400 L330,400 L330,392 L362,389 L402,389 L407.5,375" stroke-width="11.2"/><path d="M289.2,384 L289.2,398" stroke-width="8"/><path d="M444.8,310.6 L444.8,278.4 L501,278.4 L501,309.8" stroke-width="11.8"/><path d="M501,309.6 L655,309.6" stroke-width="13.8"/><path d="M655,294 L655,326.7" stroke-width="14.5"/><path d="M452,375 L452,415.5 L557.7,415.5 L557.7,342.8" stroke-width="11"/><path d="M557.7,375.9 L654,375.9" stroke-width="13.5"/><path d="M653.5,359.5 L653.5,391.7" stroke-width="13.5"/><circle cx="361.5" cy="297.8" r="5" fill="#0000ae" stroke="none"/><circle cx="408.2" cy="311" r="6.3" fill="#0000ae" stroke="none"/><circle cx="446.5" cy="310.6" r="6.3" fill="#0000ae" stroke="none"/><circle cx="408.3" cy="375" r="6.3" fill="#0000ae" stroke="none"/><circle cx="447" cy="375" r="6.3" fill="#0000ae" stroke="none"/><circle cx="362.2" cy="388.2" r="6.3" fill="#0000ae" stroke="none"/></g>
<g fill="none" stroke="#00a0a0" stroke-width="2"><circle cx="158.6" cy="180.7" r="4.1"/><circle cx="158.4" cy="212.5" r="4.1"/><circle cx="288.9" cy="384" r="4.1"/><circle cx="557.5" cy="342.8" r="4.1"/></g>
<g stroke="#fff" stroke-width="1.2"><line x1="46" y1="424.5" x2="61" y2="424.5"/><line x1="53.5" y1="418" x2="53.5" y2="432"/></g>
</svg>
<svg class="a" style="left:0;top:0" width="720" height="522" viewBox="0 0 720 522"><rect x="7.3" y="76.6" width="2.6" height="2.2" fill="#111"/><path d="M6.5,80 L9.9,80 L9.9,85 L11,85 L11,86.2 L6.5,86.2 L6.5,85 L7.5,85 L7.5,81.2 L6.5,81.2 Z" fill="#111"/><path d="M18.5,80.5 Q24,75.5 29.5,80.5 Q24,85.5 18.5,80.5 Z" fill="#f2f0c8" stroke="#a89a30" stroke-width="1"/><circle cx="24" cy="80.5" r="2.2" fill="#20b0c8"/><circle cx="24" cy="80.5" r="0.9" fill="#102030"/><rect x="9.5" y="93.5" width="4.5" height="5.5" fill="#20a020"/><rect x="4" y="91" width="6.5" height="6.5" fill="#0a0a90"/><path d="M20,90.5 L20,99 L29,99 M18,96 L23,96 M20,94 L23,91.5 M21.5,97.5 L29,97.5" fill="none" stroke="#111" stroke-width="1"/><rect x="24.5" y="90" width="4" height="2.5" fill="#333"/><line x1="0" y1="102.8" x2="32" y2="102.8" stroke="#c8c4b4" stroke-width="0.9"/><line x1="0" y1="103.6" x2="32" y2="103.6" stroke="#fff" stroke-width="0.6"/><path d="M8.2,107.5 L8.2,117.5 M3.5,112.5 L13,112.5" fill="none" stroke="#111" stroke-width="1.4"/><path d="M8.2,106.8 L6.4,109 L10,109 Z M8.2,118.2 L6.4,116 L10,116 Z M2.8,112.5 L5,110.7 L5,114.3 Z M13.7,112.5 L11.5,110.7 L11.5,114.3 Z" fill="#111"/><path d="M19.5,109.5 L27,116.5 M27,109.5 L19.5,116.5" fill="none" stroke="#111" stroke-width="1.2"/><circle cx="19.5" cy="116.5" r="1.2" fill="#111"/><circle cx="27.5" cy="116.5" r="1.2" fill="#111"/><path d="M4,124.5 L8,124.5 L8,130.5 L4,130.5 Z" fill="none" stroke="#666" stroke-width="1.1" stroke-dasharray="1.2 0.8"/><path d="M9.5,124.5 L13,124.5 L13,130.5 L9.5,130.5 Z" fill="none" stroke="#333" stroke-width="1.1"/><path d="M8.8,123 L8.8,132" fill="none" stroke="#777" stroke-width="0.7"/><path d="M18.5,127.5 L25,127.5 M23,124.5 L23,132.5" fill="none" stroke="#111" stroke-width="1.8"/><path d="M22,123.5 Q27.5,122.5 28.5,128" fill="none" stroke="#333" stroke-width="1"/><path d="M3.8,137.3 L14,137.3 L14,146.6 L3.8,146.6 Z" fill="none" stroke="#222" stroke-width="1.1" stroke-dasharray="1.5 1.1"/><path d="M20,145 L25.5,139.5" fill="none" stroke="#333" stroke-width="2.4"/><path d="M24.5,137.5 A2.8,2.8 0 1 0 28,141.5" fill="none" stroke="#333" stroke-width="1.8"/><path d="M8,157 L13.5,152 M8.5,155.5 L13.8,158.8" fill="none" stroke="#111" stroke-width="1.3"/><circle cx="5.6" cy="159.6" r="1.7" fill="none" stroke="#111" stroke-width="1"/><circle cx="8.6" cy="161" r="1.7" fill="none" stroke="#111" stroke-width="1"/><path d="M21,152.8 L28.5,159.5" fill="none" stroke="#111" stroke-width="1.3"/><ellipse cx="26" cy="161.3" rx="2.5" ry="1.6" fill="#f0e020"/><path d="M4.5,167 L12.5,175.5 M12.5,167 L4.5,175.5" fill="none" stroke="#111" stroke-width="1.8"/><path d="M21,169 L27.5,169 M21,174 L27.5,174 M22.5,167 L22.5,176 M26,167 L26,176" fill="none" stroke="#c03030" stroke-width="1"/><path d="M25,171.5 L25,178 L26.5,176.5 L28,179 L29,178.5 L27.8,176 L29.5,176 Z" fill="#111"/><path d="M5.5,181.5 L5.5,190.5 M3.5,183 L7.5,183 M3.5,189 L7.5,189" fill="none" stroke="#222" stroke-width="1.2"/><path d="M9.5,181.5 Q13.5,186 9.5,190.5 M9.5,183.5 L12.5,183.5 M9.5,188.5 L12.5,188.5" fill="none" stroke="#b03030" stroke-width="1.2"/><rect x="19" y="182.5" width="3.2" height="5" rx="1.5" fill="none" stroke="#111" stroke-width="1.2"/><rect x="22.8" y="184.5" width="1.3" height="1.3" fill="#111"/><rect x="25" y="181.5" width="3.8" height="7" rx="1.5" fill="#108a10"/><rect x="26" y="183" width="1.8" height="4" fill="#fff"/><path d="M5.5,196.5 L5.5,200 M8,196.5 L10.5,196.5 L10.5,200 L8,200 M12,196.5 L12,200" fill="none" stroke="#111" stroke-width="1"/><path d="M3.5,201.5 L14,201.5" fill="none" stroke="#d03030" stroke-width="1.2"/><path d="M6,202 L6,206 M8.5,202 L8.5,206 M11.5,202 L11.5,206" fill="none" stroke="#777" stroke-width="0.9"/><path d="M21.0,196.5 L21.0,200 M23.5,196.5 L26.0,196.5 L26.0,200 L23.5,200 M27.5,196.5 L27.5,200" fill="none" stroke="#888" stroke-width="1"/><path d="M19.0,201.5 L29.5,201.5" fill="none" stroke="#d03030" stroke-width="1.2"/><path d="M21.5,202 L21.5,206 M24.0,202 L24.0,206 M27.0,202 L27.0,206" fill="none" stroke="#222" stroke-width="0.9"/><rect x="4.5" y="211.5" width="8" height="7" fill="#111"/><rect x="6" y="213.5" width="5" height="3" fill="#e8e8e8"/><rect x="7" y="210.5" width="3" height="1.5" fill="#111"/><path d="M20.5,221 L20.5,217 Q21,212.5 28.5,212.2" fill="none" stroke="#111" stroke-width="1.6"/><path d="M4.5,235.5 L7,227.5 L13.5,226.5 Z" fill="none" stroke="#111" stroke-width="1.5"/><path d="M5.5,234 L7.5,228.5 L12,227.5 Z" fill="#555"/><path d="M19.5,235 L28.5,226.5 M25,231 L27,234.5" fill="none" stroke="#111" stroke-width="1.5"/><rect x="1.8" y="239.3" width="14.2" height="12.7" rx="2" fill="#fafcfe" stroke="#5078c0" stroke-width="1.1"/><path d="M4.5,242 L9.5,242 L13,249.5" fill="none" stroke="#111" stroke-width="1.4"/><path d="M9.5,242 L13,249.5" fill="none" stroke="#c03030" stroke-width="1.2"/><circle cx="10.5" cy="247" r="1.2" fill="#18a018"/><circle cx="13.5" cy="250" r="1.2" fill="#18a018"/><path d="M19.5,241 L24,245.5 L28.5,250" fill="none" stroke="#e09a20" stroke-width="1.3"/><circle cx="19.8" cy="241" r="1.4" fill="#18a018"/><circle cx="28.5" cy="249.5" r="1.5" fill="#18a018"/><circle cx="23" cy="244.5" r="1.2" fill="#18a018"/><line x1="0" y1="253.4" x2="32" y2="253.4" stroke="#c8c4b4" stroke-width="0.9"/><line x1="0" y1="254.2" x2="32" y2="254.2" stroke="#fff" stroke-width="0.6"/><path d="M4.3,266.3 L12.9,258.3" fill="none" stroke="#111" stroke-width="1.6"/><path d="M20.2,258.3 L27.6,258.3 L27.6,260 L24.8,260 L24.8,266.3 L23,266.3 L23,260 L20.2,260 Z" fill="#111"/><circle cx="8.6" cy="277.3" r="4.2" fill="none" stroke="#111" stroke-width="1.5"/><path d="M20.5,275 A4.2,4.2 0 1 1 24,281.5" fill="none" stroke="#111" stroke-width="1.5"/><defs><pattern id="hp" width="1.6" height="1.6" patternUnits="userSpaceOnUse"><rect width="1.6" height="1.6" fill="#222"/><rect width="0.8" height="0.8" fill="#bbb"/><rect x="0.8" y="0.8" width="0.8" height="0.8" fill="#bbb"/></pattern></defs><rect x="3.7" y="287.7" width="9.8" height="8" fill="url(#hp)" stroke="#222" stroke-width="0.6"/><path d="M19,296.9 L19,291 L23,291 L24.5,286.5 L28.2,286.5 L28.2,296.9 Z" fill="url(#hp)" stroke="#222" stroke-width="0.6"/><circle cx="8.6" cy="306.7" r="4.8" fill="#129a12" stroke="#0a600a" stroke-width="0.7"/><circle cx="8.6" cy="306.7" r="0.8" fill="#9f9"/><path d="M19.6,302.4 L28.8,311" fill="none" stroke="#8a8a20" stroke-width="1.2"/><circle cx="19.6" cy="302.4" r="1.3" fill="#0e6a0e"/><circle cx="28.8" cy="311" r="1.4" fill="#0e6a0e"/><circle cx="8.6" cy="321.2" r="3.2" fill="none" stroke="#222" stroke-width="1"/><path d="M8.6,316.5 L8.6,326 M4,321.2 L13.2,321.2" fill="none" stroke="#222" stroke-width="0.7"/><line x1="0" y1="329.8" x2="32" y2="329.8" stroke="#c8c4b4" stroke-width="0.9"/><line x1="0" y1="330.6" x2="32" y2="330.6" stroke="#fff" stroke-width="0.6"/><path d="M4.5,334 L12,342.5 M12,334 L4.5,342.5" fill="none" stroke="#18a018" stroke-width="1.2"/><circle cx="4.3" cy="334" r="1.5" fill="#0e8a0e"/><circle cx="12.3" cy="334" r="1.5" fill="#0e8a0e"/><circle cx="4.3" cy="342.5" r="1.5" fill="#0e8a0e"/><circle cx="12.3" cy="342.5" r="1.5" fill="#0e8a0e"/><circle cx="8.3" cy="338.3" r="1.5" fill="#0e8a0e"/><path d="M19,336 L29,336" fill="none" stroke="#111" stroke-width="1.2"/><path d="M19,339 L29,339" fill="none" stroke="#20a020" stroke-width="1.2"/><path d="M19,342 L29,342" fill="none" stroke="#2030d0" stroke-width="1.2"/><path d="M22,333.5 L22,344" fill="none" stroke="#d02020" stroke-width="1.2"/><path d="M25.5,333.5 L25.5,344" fill="none" stroke="#111" stroke-width="1.2"/><path d="M28,334 L28,343" fill="none" stroke="#d02020" stroke-width="1"/><circle cx="8.6" cy="352.4" r="3.8" fill="#f0e0e0" stroke="#222" stroke-width="1.1"/><path d="M7.8,349.2 L7.8,355.5" fill="none" stroke="#c02020" stroke-width="1.2"/><path d="M11,355.5 L13.8,358.3" fill="none" stroke="#111" stroke-width="1.6"/><path d="M18.5,351.5 L27,351.5 M18.5,354 L22,354" fill="none" stroke="#111" stroke-width="1.1"/><circle cx="24.5" cy="353.7" r="3.4" fill="none" stroke="#333" stroke-width="1.1"/><circle cx="24.5" cy="354.5" r="1.5" fill="#20a040"/><path d="M26.8,356 L29.5,358.8" fill="none" stroke="#111" stroke-width="1.5"/><circle cx="8.3" cy="367.8" r="5" fill="#f2e600" stroke="#222" stroke-width="1"/><circle cx="8.3" cy="366.3" r="1.5" fill="#111"/><rect x="7.6" y="366.5" width="1.4" height="4" fill="#111"/><line x1="32.5" y1="82" x2="32.5" y2="487" stroke="#f4f2ea" stroke-width="0.8"/></svg>
<svg class="a" style="left:0;top:0" width="720" height="522" viewBox="0 0 720 522"><polygon points="9.2,96.3 33.8,104.2 31.7,106.9 75.6,134.4 71.8,140.2 27.3,113.3 25.4,116.3" fill="#f40a0a"/></svg>
</body></html>
